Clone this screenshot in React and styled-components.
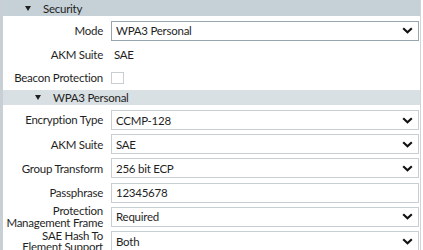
import styled, { createGlobalStyle } from 'styled-components';

const GlobalStyle = createGlobalStyle`
  html, body {
    margin: 0;
    padding: 0;
    background: #ffffff;
  }
  body {
    font-family: Lato, "Open Sans", sans-serif;
    font-size: 11px;
    letter-spacing: -0.25px;
    color: #1f1f1f;
  }
`;

const Page = styled.div`
  display: flex;
  align-items: flex-start;
  width: 423px;
  height: 250px;
  overflow: hidden;
  background: #fff;
`;

const Rail = styled.div`
  width: 3px;
  height: 100%;
  flex: none;
  background: #c9d0d5;
`;

const Panel = styled.div`
  width: 417px;
  min-height: 100%;
  flex: none;
  border-right: 1px solid #cfd5d9;
  display: flex;
  flex-direction: column;
`;

const Header = styled.div`
  display: flex;
  flex: none;
  align-items: center;
  gap: 12px;
  height: ${(p) => (p.$level ? 15.5 : 16)}px;
  padding-left: ${(p) => (p.$level ? 32 : 22)}px;
  background: ${(p) => (p.$level ? '#d9e0e3' : '#c6d1d7')};
  font-size: 11.5px;
  color: #1f1f1f;
`;

const Caret = styled.span`
  width: 0;
  height: 0;
  border-left: 3.5px solid transparent;
  border-right: 3.5px solid transparent;
  border-top: 5px solid #1f1f1f;
`;

const Body = styled.div`
  display: flex;
  flex: none;
  flex-direction: column;
  padding-top: ${(p) => p.$top}px;
`;

const Row = styled.div`
  display: grid;
  flex: none;
  grid-template-columns: 100px 1fr;
  column-gap: 8px;
  align-items: center;
  height: ${(p) => p.$h}px;
  padding-right: 1px;
`;

const Label = styled.div`
  text-align: right;
  line-height: 11.5px;
  white-space: nowrap;
  font-size: 11.5px;
  color: #1f1f1f;
`;

const Field = styled.div`
  display: flex;
  align-items: center;
  justify-content: space-between;
  height: 20px;
  box-sizing: border-box;
  border: 1px solid ${(p) => (p.$active ? '#97a6ae' : '#c8cfd3')};
  padding: 0 5px 0 4px;
  font-size: 11.5px;
  color: #1f1f1f;
`;

const Plain = styled.div`
  padding-left: 3px;
  font-size: 11.5px;
`;

const Check = styled.div`
  width: 13px;
  height: 12px;
  box-sizing: border-box;
  border: 1px solid #c8cfd3;
  background: #fff;
`;

const Chevron = () => (
  <svg width="11" height="7" viewBox="0 0 11 7">
    <path d="M1.2 1.2 L5.5 5.3 L9.8 1.2" fill="none" stroke="#111" strokeWidth="2.1" />
  </svg>
);

const Select = ({ value, active }) => (
  <Field $active={active}>
    <span>{value}</span>
    <Chevron />
  </Field>
);

const rows = [
  { label: 'Encryption Type', value: 'CCMP-128', select: true },
  { label: 'AKM Suite', value: 'SAE', select: true },
  { label: 'Group Transform', value: '256 bit ECP', select: true },
  { label: 'Passphrase', value: '12345678' },
  { label: ['Protection', 'Management Frame'], value: 'Required', select: true },
  { label: ['SAE Hash To', 'Element Support'], value: 'Both', select: true },
];

export default function App() {
  return (
    <Page>
      <GlobalStyle />
      <Rail />
      <Panel>
        <Header>
          <Caret />
          Security
        </Header>
        <Body $top={3}>
          <Row $h={23.5}>
            <Label>Mode</Label>
            <Select value="WPA3 Personal" active />
          </Row>
          <Row $h={23.5}>
            <Label>AKM Suite</Label>
            <Plain>SAE</Plain>
          </Row>
          <Row $h={23.5}>
            <Label>Beacon Protection</Label>
            <Check />
          </Row>
        </Body>
        <Header $level={1}>
          <Caret />
          WPA3 Personal
        </Header>
        <Body $top={3}>
          {rows.map((r) => (
            <Row $h={24.2} key={r.value}>
              <Label>
                {Array.isArray(r.label)
                  ? r.label.map((l) => <div key={l}>{l}</div>)
                  : r.label}
              </Label>
              {r.select ? (
                <Select value={r.value} />
              ) : (
                <Field>
                  <span>{r.value}</span>
                </Field>
              )}
            </Row>
          ))}
        </Body>
      </Panel>
    </Page>
  );
}
